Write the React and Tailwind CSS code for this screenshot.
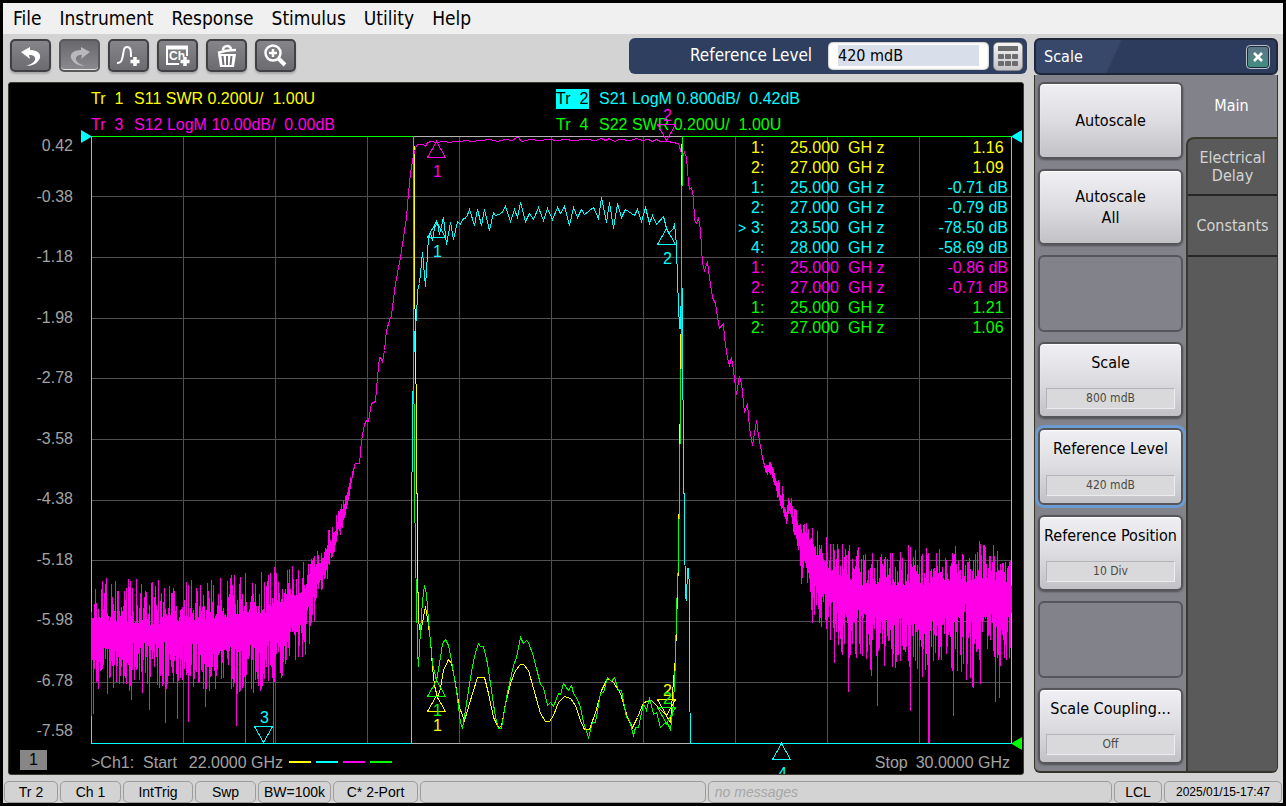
import React, { useState } from 'react';
import clsx from 'clsx';

const COLORS = {
    yellow: '#ffff00',
    cyan: '#00ffff',
    magenta: '#ff00e6',
    green: '#00ff00',
};

const MENUS = ['File', 'Instrument', 'Response', 'Stimulus', 'Utility', 'Help'];

const SCALE_LABELS = ['0.42', '-0.38', '-1.18', '-1.98', '-2.78', '-3.58', '-4.38', '-5.18', '-5.98', '-6.78', '-7.58'];

const TRACES = [
    { id: 'Tr  1', setup: 'S11 SWR 0.200U/  1.00U', className: 'text-[#ffff00]' },
    { id: 'Tr  2', setup: 'S21 LogM 0.800dB/  0.42dB', className: 'text-[#00ffff]', active: true },
    { id: 'Tr  3', setup: 'S12 LogM 10.00dB/  0.00dB', className: 'text-[#ff00e6]' },
    { id: 'Tr  4', setup: 'S22 SWR 0.200U/  1.00U', className: 'text-[#00ff00]' },
];

const MARKER_ROWS = [
    { n: '1:', freq: '25.000', value: '1.16 ', className: 'text-[#ffff00]' },
    { n: '2:', freq: '27.000', value: '1.09 ', className: 'text-[#ffff00]' },
    { n: '1:', freq: '25.000', value: '-0.71 dB', className: 'text-[#00ffff]' },
    { n: '2:', freq: '27.000', value: '-0.79 dB', className: 'text-[#00ffff]' },
    { n: '3:', freq: '23.500', value: '-78.50 dB', className: 'text-[#00ffff]', active: true },
    { n: '4:', freq: '28.000', value: '-58.69 dB', className: 'text-[#00ffff]' },
    { n: '1:', freq: '25.000', value: '-0.86 dB', className: 'text-[#ff00e6]' },
    { n: '2:', freq: '27.000', value: '-0.71 dB', className: 'text-[#ff00e6]' },
    { n: '1:', freq: '25.000', value: '1.21 ', className: 'text-[#00ff00]' },
    { n: '2:', freq: '27.000', value: '1.06 ', className: 'text-[#00ff00]' },
];

const SOFTKEYS = [
    { label: 'Autoscale' },
    { label: 'Autoscale All' },
    {},
    { label: 'Scale', value: '800 mdB' },
    { label: 'Reference Level', value: '420 mdB', active: true },
    { label: 'Reference Position', value: '10 Div' },
    {},
    { label: 'Scale Coupling...', value: 'Off' },
];

// ---- trace data, in plot units (x 91..1012, y 136..744) ----

const S11 = '414,145 414,300 415,317 416,448 417,537 417,592 418,592 418,620 420,632 422,622 425,606 427,618 430,640 432,667 434,685 437,697 440,688 443,670 448,659 451,663 454,678 459,707 464,720 467,710 472,693 477,677 484,677 488,693 493,717 498,727 501,726 505,703 510,683 515,670 520,664 523,664 528,670 533,688 540,713 545,721 549,721 553,715 558,702 564,696 570,698 575,705 580,720 584,729 589,729 595,712 601,690 607,678 613,682 620,693 627,717 632,727 637,717 643,702 651,700 657,706 665,714 670,722 673,680 675,657 677,593 678,560 679,470 680,380 681,290 681,143';

const S22 = '91,136 413,136 413,323 414,482 415,560 416,595 417,650 418,666 420,630 422,600 424,585 426,594 428,620 432,663 436,680 440,657 442,643 445,639 448,645 451,660 456,690 460,722 462,728 465,710 469,683 472,666 475,652 478,643 480,646 483,646 487,663 491,690 495,717 498,728 501,728 506,697 509,683 513,665 516,657 520,637 523,643 526,640 528,642 532,653 536,668 540,684 543,687 547,705 550,702 553,706 558,693 560,694 563,683 568,690 571,685 573,693 577,699 580,707 583,722 588,737 592,722 595,722 600,693 603,692 607,677 611,681 614,677 618,690 621,690 626,717 629,720 633,735 635,727 638,727 643,703 646,710 649,697 653,714 656,712 660,727 664,723 667,723 670,729 673,703 675,660 676,610 678,560 679,480 680,410 681,330 681,235 682,136 1011,136';

const S21 = '91,743 411,743 411,527 412,420 413,363 415,320 416,320 417,290 419,283 422,252 425,286 428,237 430,233 432,240 434,227 437,222 439,234 443,217 446,244 450,222 453,239 457,221 460,224 462,219 466,217 469,209 474,225 477,209 481,225 484,209 489,230 493,212 495,215 501,213 505,206 510,221 514,209 517,217 520,202 525,221 529,213 533,219 538,207 543,220 547,208 552,219 557,207 560,213 564,206 569,225 573,207 577,217 581,209 584,214 593,207 598,218 601,197 606,222 609,202 613,228 617,203 621,217 625,209 634,215 637,209 641,221 645,207 649,223 652,215 656,224 663,216 666,228 668,233 673,228 674,223 676,245 677,280 679,328 680,328 681,285 682,290 682,346 683,450 684,533 685,596 686,600 687,568 688,568 689,588 689,678 690,743 1011,743';

const S12 = '354,463 359,463 361,440 364,424 366,420 368,421 371,403 375,401 377,377 379,357 380,357 382,361 384,350 386,330 389,320 391,315 395,283 400,257 403,237 406,217 408,193 410,173 412,160 415,147 417,144 423,144 425,146 427,142 431,141 436,142 443,141 449,142 454,141 460,141 465,140 472,141 480,140 490,139 497,141 504,139 512,140 516,137 518,137 521,141 530,139 538,140 549,139 556,140 566,139 572,140 585,139 595,140 601,138 605,140 609,138 614,141 619,139 630,140 636,138 642,140 648,139 652,141 656,139 660,141 668,141 672,142 678,143 681,153 682,156 684,152 686,157 688,182 689,189 691,187 693,197 694,220 696,223 698,217 700,230 702,263 704,270 707,261 709,277 712,297 715,303 718,323 719,328 723,323 724,337 727,358 729,365 731,357 733,370 736,394 739,376 741,383 744,412 747,403 749,427 752,445 756,420 758,435 762,457 766,473';

// envelope of the noise: [x, highest top, lowest top, highest bottom, lowest bottom]
const NOISE_LEFT = [
    [91, 576, 618, 638, 738],
    [150, 578, 624, 642, 742],
    [180, 576, 620, 640, 732],
    [235, 574, 616, 646, 742],
    [265, 566, 612, 640, 743],
    [285, 566, 600, 630, 720],
    [305, 560, 590, 615, 694],
    [313, 550, 570, 590, 660],
    [322, 541, 560, 572, 606],
    [330, 522, 545, 552, 594],
    [337, 510, 524, 530, 544],
    [345, 494, 502, 510, 521],
    [354, 461, 464, 467, 471],
];
const NOISE_RIGHT = [
    [765, 462, 466, 470, 478],
    [771, 460, 464, 472, 478],
    [777, 474, 486, 490, 502],
    [782, 482, 500, 506, 516],
    [786, 500, 512, 520, 530],
    [789, 488, 500, 508, 514],
    [793, 503, 516, 524, 540],
    [799, 514, 528, 544, 560],
    [801, 524, 534, 580, 606],
    [804, 515, 530, 556, 572],
    [810, 520, 545, 570, 650],
    [820, 530, 560, 590, 660],
    [835, 532, 574, 602, 690],
    [850, 540, 584, 608, 736],
    [870, 552, 584, 608, 700],
    [900, 540, 584, 612, 730],
    [925, 540, 584, 616, 740],
    [945, 548, 580, 608, 738],
    [968, 536, 582, 602, 726],
    [990, 538, 580, 606, 720],
    [1011, 552, 584, 610, 734],
];

const makeRandom = (seed) => () => {
    seed = (seed * 1664525 + 1013904223) % 4294967296;
    return seed / 4294967296;
};

const noisePath = (env, seed) => {
    const rnd = makeRandom(seed);
    const parts = [];
    let k = 0;
    for (let x = env[0][0]; x <= env[env.length - 1][0]; x++) {
        while (k < env.length - 2 && x > env[k + 1][0]) k++;
        const [a, b] = [env[k], env[k + 1]];
        const t = (x - a[0]) / (b[0] - a[0]);
        const at = (i) => a[i] + (b[i] - a[i]) * t;
        const range = at(4) - at(3);
        const top = at(2) - (at(2) - at(1)) * Math.pow(rnd(), 1.3);
        // one column in six drops into a deep null
        const spike = rnd() > 0.83 ? range * 0.5 * rnd() : 0;
        const bottom = at(3) + range * 0.5 * rnd() + spike;
        parts.push(`M${x} ${Math.round(top)}V${Math.round(bottom)}`);
    }
    return parts.join('');
};

const NOISE = noisePath(NOISE_LEFT, 7) + noisePath(NOISE_RIGHT, 21) + 'M928 600V743M929 600V743M245 620V743M273 620V743';

const MARKERS = [
    { n: 1, x: 436, y: 141, color: COLORS.magenta },
    { n: 2, x: 666, y: 140, color: COLORS.magenta, down: true },
    { n: 1, x: 436, y: 221, color: COLORS.cyan },
    { n: 2, x: 666, y: 228, color: COLORS.cyan },
    { n: 3, x: 263, y: 742, color: COLORS.cyan, down: true },
    { n: 4, x: 781, y: 743, color: COLORS.cyan },
    { n: 1, x: 436, y: 695, color: COLORS.yellow },
    { n: 2, x: 666, y: 715, color: COLORS.yellow, down: true },
    { n: 1, x: 436, y: 680, color: COLORS.green },
    { n: 2, x: 666, y: 723, color: COLORS.green, down: true },
];

const Marker = ({ n, x, y, color, down }) => {
    const base = down ? y - 16 : y + 16;
    return (
        <g>
            <path d={`M${x} ${y}L${x - 9} ${base}H${x + 9}Z`} fill="none" stroke={color} />
            <text x={x + 1} y={down ? y - 20 : y + 35} textAnchor="middle" fill={color}>{n}</text>
        </g>
    );
};

const Plot = () => (
    <svg viewBox="91 136 921 608" className="block w-full overflow-visible text-[16px]" role="img" aria-label="S-parameter traces">
        <g transform="translate(0.5 0.5)" fill="none" shapeRendering="crispEdges">
            <g stroke="#505050">
                {[1, 2, 3, 4, 5, 6, 7, 8, 9].map((i) => (
                    <path key={i} d={`M${91 + i * 92} 136V743M91 ${Math.floor(136 + i * 60.7)}H1011`} />
                ))}
            </g>
            <path d="M91 136H1011V743H91Z" stroke="#b4b4b4" />
            <path d={NOISE} stroke={COLORS.magenta} />
            <polyline points={S11} stroke={COLORS.yellow} />
            <polyline points={S21} stroke={COLORS.cyan} />
            <polyline points={S12} stroke={COLORS.magenta} />
            <polyline points={S22} stroke={COLORS.green} />
        </g>
        <g transform="translate(0.5 0.5)" shapeRendering="crispEdges">
            {MARKERS.map((m, i) => <Marker key={i} {...m} />)}
        </g>
        <path d="M81 130L92 136.5L81 143Z" fill={COLORS.cyan} />
        <path d="M1022 130L1011 136.5L1022 143Z" fill={COLORS.cyan} />
        <path d="M1022 737L1011 743.5L1022 750Z" fill={COLORS.green} />
    </svg>
);

const MarkerTable = () => (
    <table className="absolute top-[2px] right-[4px] text-[16px] leading-[20px] whitespace-pre">
        <tbody>
            {MARKER_ROWS.map((row, i) => (
                <tr key={i} className={row.className}>
                    <td className="w-[13px] p-0 text-[14px]">{row.active ? '>' : ''}</td>
                    <td className="w-[39px] p-0">{row.n}</td>
                    <td className="w-[58px] p-0">{row.freq}</td>
                    <td className="w-[75px] p-0">GH z</td>
                    <td className="w-[85px] p-0 text-right">{row.value}</td>
                </tr>
            ))}
        </tbody>
    </table>
);

const ToolButton = ({ label, pressed, children }) => (
    <button
        aria-label={label}
        className={clsx(
            'flex h-[33px] w-[41px] items-center justify-center rounded-[5px] border-2',
            pressed
                ? 'border-[#59595c] bg-linear-to-b from-[#68686d] to-[#8a8a8f] shadow-[inset_0_-1px_0_#e4e4e4]'
                : 'border-[#414143] bg-linear-to-b from-[#85858a] to-[#6b6b70] shadow-[0_2px_2px_#a8a8a8]'
        )}
    >
        <svg width="30" height="26" viewBox="0 0 30 26" fill="none" stroke={pressed ? '#b9b9bb' : '#fff'}>{children}</svg>
    </button>
);

const Toolbar = () => (
    <div className="flex gap-2 pt-[1px] pl-[2px]">
        <ToolButton label="Undo">
            <path d="M5 9L14 4V7C22 7 25 11 24 15C22 20 17 23 10 23C16 21 20 18 19 15C18 12 16 12 13 12L14 16Z" fill="#fff" stroke="none" />
        </ToolButton>
        <ToolButton label="Redo" pressed>
            <path d="M25 9L16 4V7C8 7 5 11 6 15C8 20 13 23 20 23C14 21 10 18 11 15C12 12 14 12 17 12L16 16Z" fill="#b9b9bb" stroke="none" />
        </ToolButton>
        <ToolButton label="Add trace">
            <path d="M3 20C7 20 8 18 9 12C10 6 10 4 13 4C17 4 17 8 17 14" strokeWidth="2" />
            <path d="M21 14V23M16.500 18.500H25.500" strokeWidth="3.500" />
        </ToolButton>
        <ToolButton label="Add channel">
            <path d="M4 3V21H16M24 3V13" strokeWidth="2" />
            <path d="M3 4.500H25" strokeWidth="4" />
            <text x="6" y="17" fontSize="12" fontWeight="bold" fill="#fff" stroke="none" fontFamily="Liberation Sans">Ch</text>
            <path d="M22 14V23M17.500 18.500H26.500" stroke="#707074" strokeWidth="5" />
            <path d="M22 14V23M17.500 18.500H26.500" strokeWidth="3.500" />
        </ToolButton>
        <ToolButton label="Delete">
            <path d="M6 10C11 8 17 7 24 7M11 7C11 2 18 2 19 6" strokeWidth="2.500" />
            <path d="M6 11H24L22 24H8Z" fill="#fff" stroke="none" />
            <path d="M10.500 13L11.500 22M15 13V22M19.500 13L18.500 22" stroke="#707074" strokeWidth="2" />
        </ToolButton>
        <ToolButton label="Zoom">
            <circle cx="12" cy="10" r="7.500" strokeWidth="2.500" />
            <path d="M12 6V14M8 10H16" strokeWidth="2.500" />
            <path d="M17 15L24 22" strokeWidth="4" />
        </ToolButton>
    </div>
);

const EntryBar = () => {
    const [value, setValue] = useState('420 mdB');
    return (
        <div className="flex h-[36px] items-center rounded-[6px] bg-[#2f3f60] pr-1 pl-[61px]">
            <label htmlFor="entry" className="w-[138px] text-[17px] whitespace-nowrap text-white">Reference Level</label>
            <div className="mr-1 flex h-[28px] items-center rounded-[5px] bg-white px-[10px] pb-[1px] shadow-[inset_0_0_2px_#666]">
                <input
                    id="entry"
                    value={value}
                    onChange={(e) => setValue(e.target.value)}
                    className="h-[21px] w-[141px] bg-[#d8dfea] text-[16px] text-black outline-none"
                />
            </div>
            <button aria-label="Keypad" className="flex h-[29px] w-[30px] items-center justify-center rounded-[5px] border border-[#8b8b8b] bg-linear-to-b from-[#f6f6f6] to-[#c4c4c8]">
                <svg width="20" height="20" viewBox="0 0 20 20" fill="#6c6c6e">
                    <rect width="20" height="5" />
                    {[0, 7, 14].map((x) => (
                        <g key={x}>
                            <rect x={x} y="8" width="6" height="5" rx="1" />
                            <rect x={x} y="15" width="6" height="5" rx="1" />
                        </g>
                    ))}
                </svg>
            </button>
        </div>
    );
};

const Screen = () => (
    <div className="mr-[1px] overflow-hidden rounded-[3px] border border-[#3a3a30] bg-black pr-[11px] text-[16px] text-[#a3a3a3]">
        <div className="-mr-[9px] ml-[82px] grid grid-cols-2 pt-[3px] whitespace-pre">
            {TRACES.map((t) => (
                <div key={t.id} className={clsx('flex h-[26px] items-center', t.className)}>
                    <span className={clsx('mr-[10px] w-[33px] leading-[20px]', t.active && 'bg-[#00ffff] text-black')}>{t.id}</span>
                    <span>{t.setup}</span>
                </div>
            ))}
        </div>
        <div className="-mt-[2px] flex">
            <div className="flex w-[82px] shrink-0 flex-col pr-[18px] text-right leading-[20px]">
                {SCALE_LABELS.map((label, i) => (
                    <div
                        key={label}
                        className={clsx(
                            'flex justify-end',
                            i === 0 && 'flex-[1_1_0] items-start',
                            i === 10 && 'flex-[1_1_0] items-end pb-[3px]',
                            i > 0 && i < 10 && 'flex-[2_1_0] items-center'
                        )}
                    >
                        {label}
                    </div>
                ))}
            </div>
            <div className="relative min-w-0 flex-1">
                <Plot />
                <MarkerTable />
            </div>
        </div>
        <div className="flex h-[30px] items-center pt-[7px]">
            <div className="mb-[6px] ml-[11px] h-[20px] w-[27px] bg-[#868686] text-center leading-[20px] text-black">1</div>
            <span className="ml-[44px] whitespace-pre">&gt;Ch1:  Start</span>
            <span className="ml-3">22.0000 GHz</span>
            <div className="mb-[2px] ml-[6px] flex gap-[5px]">
                <i className="h-[2px] w-[22px] bg-[#ffff00]" />
                <i className="h-[2px] w-[22px] bg-[#00ffff]" />
                <i className="h-[2px] w-[22px] bg-[#ff00e6]" />
                <i className="h-[2px] w-[22px] bg-[#00ff00]" />
            </div>
            <span className="mr-2 ml-auto">Stop</span>
            <span className="mr-[2px]">30.0000 GHz</span>
        </div>
    </div>
);

const SoftKey = ({ label, value, active }) => (
    <button
        disabled={!label}
        className={clsx(
            'flex flex-col items-center rounded-[6px] border-2 text-[16px] leading-[21px] text-black',
            label
                ? 'border-[#55555a] bg-linear-to-b from-[#f0eff3] via-[#dddce0] to-[#c2c1c5] shadow-[inset_0_1px_1px_#fff,0_1px_2px_#505058]'
                : 'border-[#55555c] bg-[#82828b]',
            value ? 'justify-between pt-[8px] pb-[7px]' : 'justify-center',
            active && 'outline-3 outline-[#6c9bd2]'
        )}
    >
        {label && <span className={clsx(value ? 'whitespace-nowrap' : 'w-[90px]')}>{label}</span>}
        {value && (
            <span className="w-[129px] border border-[#ececee] border-t-[#b4b4b8] border-l-[#b4b4b8] bg-[#d9d9db] text-[12px] leading-[19px] text-[#4a4a42]">
                {value}
            </span>
        )}
    </button>
);

const ScalePanel = () => (
    <aside className="mr-[5px] mb-[2px] ml-[7px] flex w-[244px] shrink-0 flex-col">
        <div className="flex h-[37px] items-center justify-between rounded-[6px] border-2 border-[#1f2738] bg-[linear-gradient(115deg,#37486b_33%,#2d3c5d_34%)] pr-[6px] pl-2">
            <h2 className="text-[16px] text-white">Scale</h2>
            <button aria-label="Close" className="flex h-[24px] w-[24px] items-center justify-center rounded-[4px] border border-[#b8c0ca] bg-linear-to-b from-[#5d7387] to-[#3f8f80] shadow-[inset_0_0_0_1px_#1c2a3c]">
                <svg width="12" height="12" viewBox="0 0 12 12" stroke="#fff" strokeWidth="2.500"><path d="M2 2L10 10M10 2L2 10" /></svg>
            </button>
        </div>
        <div className="flex flex-1 rounded-b-[6px] border-x border-b-2 border-[#33332a] bg-[#82828b]">
            <div className="grid flex-1 auto-rows-fr gap-[10px] px-[3px] pt-[7px] pb-[7px]">
                {SOFTKEYS.map((key, i) => <SoftKey key={i} {...key} />)}
            </div>
            <nav className="flex w-[91px] flex-col text-[16px] leading-[18px] text-[#d4d4d4]">
                <button className="h-[62px] text-white">Main</button>
                <div className="flex flex-1 flex-col rounded-tl-[8px] rounded-br-[4px] border-t-2 border-l-2 border-[#3a3a2c] bg-[#5a5a5a]">
                    <button className="h-[57px] border-b-2 border-[#262626]">Electrical Delay</button>
                    <button className="h-[61px] border-b-2 border-[#262626]">Constants</button>
                </div>
            </nav>
        </div>
    </aside>
);

const StatusCell = ({ className, children }) => (
    <div className={clsx('flex h-[22px] items-center justify-center rounded-[5px] border border-[#9c9c9c] whitespace-nowrap', className)}>
        {children}
    </div>
);

const StatusBar = () => (
    <footer className="flex gap-[2px] pt-[6px] pr-[1px] pl-[1px] font-['Liberation_Sans',sans-serif] text-[14px] leading-[20px] text-black">
        <StatusCell className="w-[54px]">Tr 2</StatusCell>
        <StatusCell className="w-[61px]">Ch 1</StatusCell>
        <StatusCell className="w-[70px]">IntTrig</StatusCell>
        <StatusCell className="w-[61px]">Swp</StatusCell>
        <StatusCell className="w-[73px]">BW=100k</StatusCell>
        <StatusCell className="w-[85px]">C* 2-Port</StatusCell>
        <StatusCell className="flex-[288_1_0]" />
        <StatusCell className="flex-[402_1_0] justify-start! pl-[6px] text-[#a6a6a6] italic">no messages</StatusCell>
        <StatusCell className="w-[48px]">LCL</StatusCell>
        <StatusCell className="w-[118px] text-[12px]">2025/01/15-17:47</StatusCell>
    </footer>
);

const App = () => {
    return (
        <div className="min-h-screen bg-black p-[3px] font-['DejaVu_Sans_Condensed','Open_Sans',sans-serif]">
            <div className="bg-[#d3d3d3]">
                <nav className="flex h-[31px] items-center gap-[18px] bg-[#f0f0f0] pl-[10px] text-[19px] text-black">
                    {MENUS.map((m) => <button key={m}>{m}</button>)}
                </nav>
                <div className="flex pt-1">
                    <main className="min-w-0 flex-1 pl-[5px] font-['Liberation_Sans',sans-serif]">
                        <div className="flex h-[44px] items-start justify-between font-['DejaVu_Sans_Condensed','Open_Sans',sans-serif]">
                            <Toolbar />
                            <EntryBar />
                        </div>
                        <div className="pr-[2px]">
                            <Screen />
                        </div>
                    </main>
                    <ScalePanel />
                </div>
                <StatusBar />
            </div>
        </div>
    );
};

export default App;
